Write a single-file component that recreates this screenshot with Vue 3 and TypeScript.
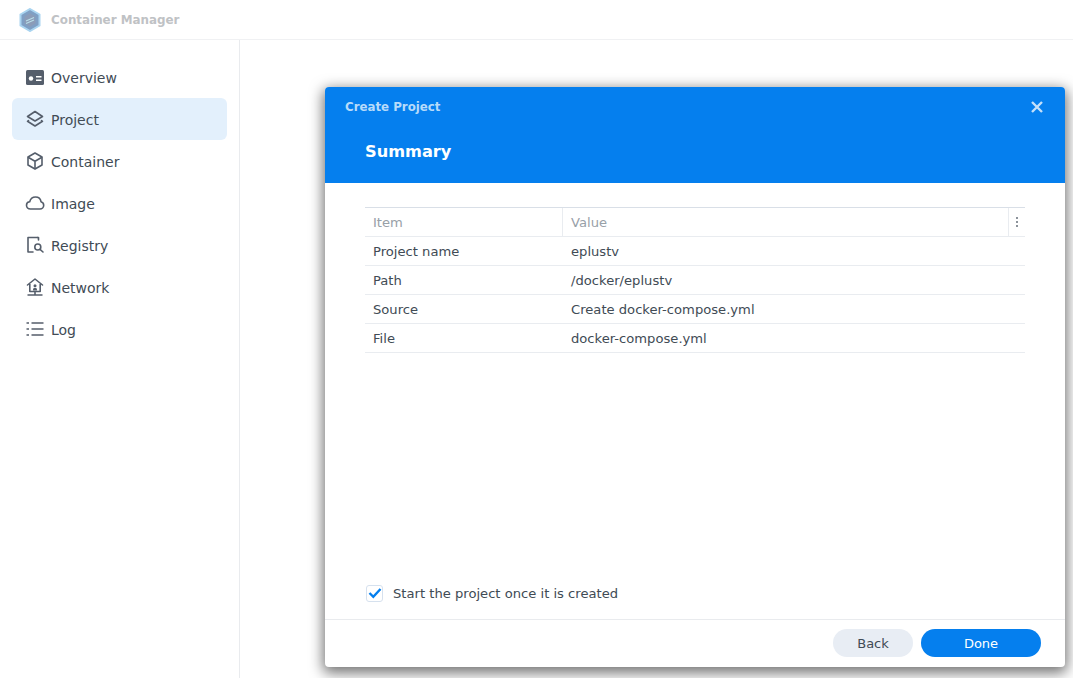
<script setup lang="ts">
interface NavItem { label: string; icon: string; active?: boolean }
const nav: NavItem[] = [
  { label: 'Overview', icon: 'overview' },
  { label: 'Project', icon: 'project', active: true },
  { label: 'Container', icon: 'container' },
  { label: 'Image', icon: 'image' },
  { label: 'Registry', icon: 'registry' },
  { label: 'Network', icon: 'network' },
  { label: 'Log', icon: 'log' }
]
const rows = [
  ['Project name', 'eplustv'],
  ['Path', '/docker/eplustv'],
  ['Source', 'Create docker-compose.yml'],
  ['File', 'docker-compose.yml']
]
</script>

<template>
  <div class="app">
    <header class="topbar">
      <svg class="logo" width="22" height="24" viewBox="0 0 22 24">
        <path d="M11 1 L20.500 6.500 V17.500 L11 23 L1.500 17.500 V6.500 Z" fill="#7f9fc4" stroke="#a9d4f0" stroke-width="2" />
        <path d="M5.500 8.500 L11 5.300 L16.500 8.500 V15.500 L11 18.700 L5.500 15.500 Z" fill="#8b9cb8" />
        <path d="M7 13 L15 9.500 M7 15.500 L15 12" stroke="#b8dfe9" stroke-width="1.200" fill="none" />
      </svg>
      <span class="app-title">Container Manager</span>
    </header>
    <div class="body">
      <aside class="sidebar">
        <div v-for="item in nav" :key="item.label" class="nav-item" :class="{ active: item.active }">
          <svg class="nav-icon" width="20" height="20" viewBox="0 0 20 20" fill="none" stroke="#555e6b" stroke-width="1.600" stroke-linejoin="round" stroke-linecap="round">
            <template v-if="item.icon === 'overview'">
              <rect x="1" y="3" width="18" height="15" rx="1.500" fill="#555e6b" stroke="none" />
              <circle cx="6" cy="11.500" r="2.200" fill="#fff" stroke="none" />
              <path d="M11 9.800 H16.500 M11 13.200 H16.500" stroke="#fff" stroke-linecap="butt" />
            </template>
            <template v-else-if="item.icon === 'project'">
              <path d="M10 2.500 L17.500 7.500 L10 12 L2.500 7.500 Z" />
              <path d="M3.500 11.500 L2.500 12.300 L10 17 L17.500 12.300 L16.500 11.500" />
            </template>
            <template v-else-if="item.icon === 'container'">
              <path d="M10 2 L17 6 V14 L10 18 L3 14 V6 Z" />
              <path d="M3.500 6.500 L10 10.200 L16.500 6.500 M10 10.200 V17.500" />
            </template>
            <template v-else-if="item.icon === 'image'">
              <path d="M5.500 16 C3 16 1.500 14.200 1.500 12.200 C1.500 10.200 3 8.800 4.700 8.700 C5.500 5.800 7.800 4 10.500 4 C13.500 4 15.600 6 16 8.700 C17.600 9.200 18.700 10.600 18.700 12.300 C18.700 14.400 17 16 15 16 Z" />
            </template>
            <template v-else-if="item.icon === 'registry'">
              <path d="M12.500 2.500 H3 V17 H8" />
              <path d="M12.500 2.500 H13.500 V5" />
              <circle cx="12.800" cy="12" r="3" />
              <path d="M15 14.300 L18 17" />
            </template>
            <template v-else-if="item.icon === 'network'">
              <path d="M2.500 8 L10 2 L17.500 8 M4.800 7 V14.500 H15.200 V7" />
              <circle cx="10" cy="8.700" r="1.500" fill="#555e6b" stroke="none" />
              <path d="M8 13.500 V12.200 A2 1.500 0 0 1 12 12.200 V13.500" fill="#555e6b" stroke="none" />
              <path d="M2.500 18 H17.500 M10 15 V18" stroke-linecap="butt" />
            </template>
            <template v-else>
              <path d="M1.500 4 H4 M1.500 10 H4 M1.500 16 H4 M6.500 4 H18.500 M6.500 10 H18.500 M6.500 16 H18.500" stroke-linecap="butt" stroke-width="1.700" />
            </template>
          </svg>
          <span class="nav-label">{{ item.label }}</span>
        </div>
      </aside>
      <main class="main">
        <section class="dialog">
          <div class="dialog-head">
            <div class="head-row">
              <span class="dialog-title">Create Project</span>
              <svg class="close" width="12" height="12" viewBox="0 0 12 12">
                <path d="M1 1 L11 11 M11 1 L1 11" stroke="#c4e0fa" stroke-width="2.400" />
              </svg>
            </div>
            <h2 class="step-title">Summary</h2>
          </div>
          <div class="dialog-body">
            <div class="grid">
              <div class="tr th">
                <div class="c1">Item</div>
                <div class="c2">Value</div>
                <div class="c3"><i></i><i></i><i></i></div>
              </div>
              <div v-for="r in rows" :key="r[0]" class="tr">
                <div class="c1">{{ r[0] }}</div>
                <div class="c2 plain">{{ r[1] }}</div>
              </div>
            </div>
            <label class="check">
              <span class="box">
                <svg width="14" height="12" viewBox="0 0 14 12">
                  <path d="M1.500 6 L5.300 9.800 L12.500 2" fill="none" stroke="#057fee" stroke-width="2.400" />
                </svg>
              </span>
              <span>Start the project once it is created</span>
            </label>
          </div>
          <footer class="dialog-foot">
            <button class="btn back">Back</button>
            <button class="btn done">Done</button>
          </footer>
        </section>
      </main>
    </div>
  </div>
</template>

<style scoped>
.app {
  width: 1073px;
  height: 678px;
  overflow: hidden;
  background: #fff;
  display: flex;
  flex-direction: column;
  font-family: "DejaVu Sans", "Liberation Sans", sans-serif;
  font-size: 13.130px;
  color: #414b55;
}
.topbar {
  height: 40px;
  box-sizing: border-box;
  border-bottom: 1px solid #f0f1f3;
  display: flex;
  align-items: center;
  padding-left: 19px;
  flex: none;
}
.logo { margin-right: 10px; flex: none; }
.app-title {
  font-size: 11.900px;
  font-weight: 700;
  color: #bfc2c5;
}
.body { flex: 1; display: flex; min-height: 0; }
.sidebar {
  width: 240px;
  box-sizing: border-box;
  border-right: 1px solid #e9ebee;
  padding: 16px 12px 0;
  flex: none;
}
.nav-item {
  width: 215px;
  height: 42px;
  display: flex;
  align-items: center;
  padding-left: 13px;
  box-sizing: border-box;
  border-radius: 6px;
  font-size: 14px;
  color: #414b55;
}
.nav-item.active { background: #e3f0fc; }
.nav-icon { margin-right: 6px; flex: none; }
.nav-label { padding-top: 2px; }
.main {
  flex: 1;
  padding: 47px 8px 11px 85px;
  min-width: 0;
  display: flex;
}
.dialog {
  flex: 1;
  display: flex;
  flex-direction: column;
  border-radius: 4px;
  overflow: hidden;
  background: #fff;
  box-shadow: 0 4px 14px 2px rgba(0, 0, 0, 0.55);
}
.dialog-head {
  height: 96px;
  background: #057fee;
  flex: none;
  box-sizing: border-box;
  padding: 0 20px;
}
.head-row {
  height: 39px;
  display: flex;
  align-items: center;
  justify-content: space-between;
  padding-right: 2px;
}
.dialog-title {
  font-size: 11.800px;
  font-weight: 700;
  color: #b7dbfa;
}
.close { flex: none; }
.step-title {
  margin: 15px 0 0 20px;
  font-size: 16.200px;
  line-height: 22px;
  font-weight: 700;
  color: #fff;
}
.dialog-body {
  flex: 1;
  display: flex;
  flex-direction: column;
  padding: 24px 40px 0;
  min-height: 0;
}
.grid { border-top: 1px solid #d9dfe7; }
.tr {
  height: 29px;
  display: flex;
  align-items: center;
  border-bottom: 1px solid #e9ecf0;
  box-sizing: border-box;
}
.c1 { width: 198px; box-sizing: border-box; padding-left: 8px; flex: none; height: 100%; line-height: 30px; }
.c2 { flex: 1; padding-left: 8px; height: 100%; line-height: 30px; }
.th { color: #98a0a8; }
.th .c1 { border-right: 1px solid #e9ecf0; }
.c3 {
  width: 16px;
  height: 100%;
  border-left: 1px solid #e9ecf0;
  flex: none;
  display: flex;
  flex-direction: column;
  align-items: center;
  justify-content: center;
  gap: 2px;
}
.c3 i { width: 2px; height: 2px; background: #8c939b; display: block; }
.check {
  margin-top: auto;
  margin-bottom: 17px;
  display: flex;
  align-items: center;
  gap: 10px;
  height: 18px;
  margin-left: 1px;
}
.box {
  width: 17px;
  height: 17px;
  border: 1px solid #d6e1ee;
  border-radius: 3px;
  box-sizing: border-box;
  display: flex;
  align-items: center;
  justify-content: center;
  flex: none;
}
.dialog-foot {
  height: 48px;
  flex: none;
  box-sizing: border-box;
  border-top: 1px solid #e9ebee;
  display: flex;
  justify-content: flex-end;
  align-items: flex-start;
  gap: 8px;
  padding: 9px 24px 0 0;
}
.btn {
  height: 28px;
  border: 0;
  border-radius: 14px;
  font-family: inherit;
  font-size: 13px;
  padding: 0;
}
.back { width: 80px; background: #e8edf4; color: #414b55; }
.done { width: 120px; background: #057fee; color: #fff; }
</style>
